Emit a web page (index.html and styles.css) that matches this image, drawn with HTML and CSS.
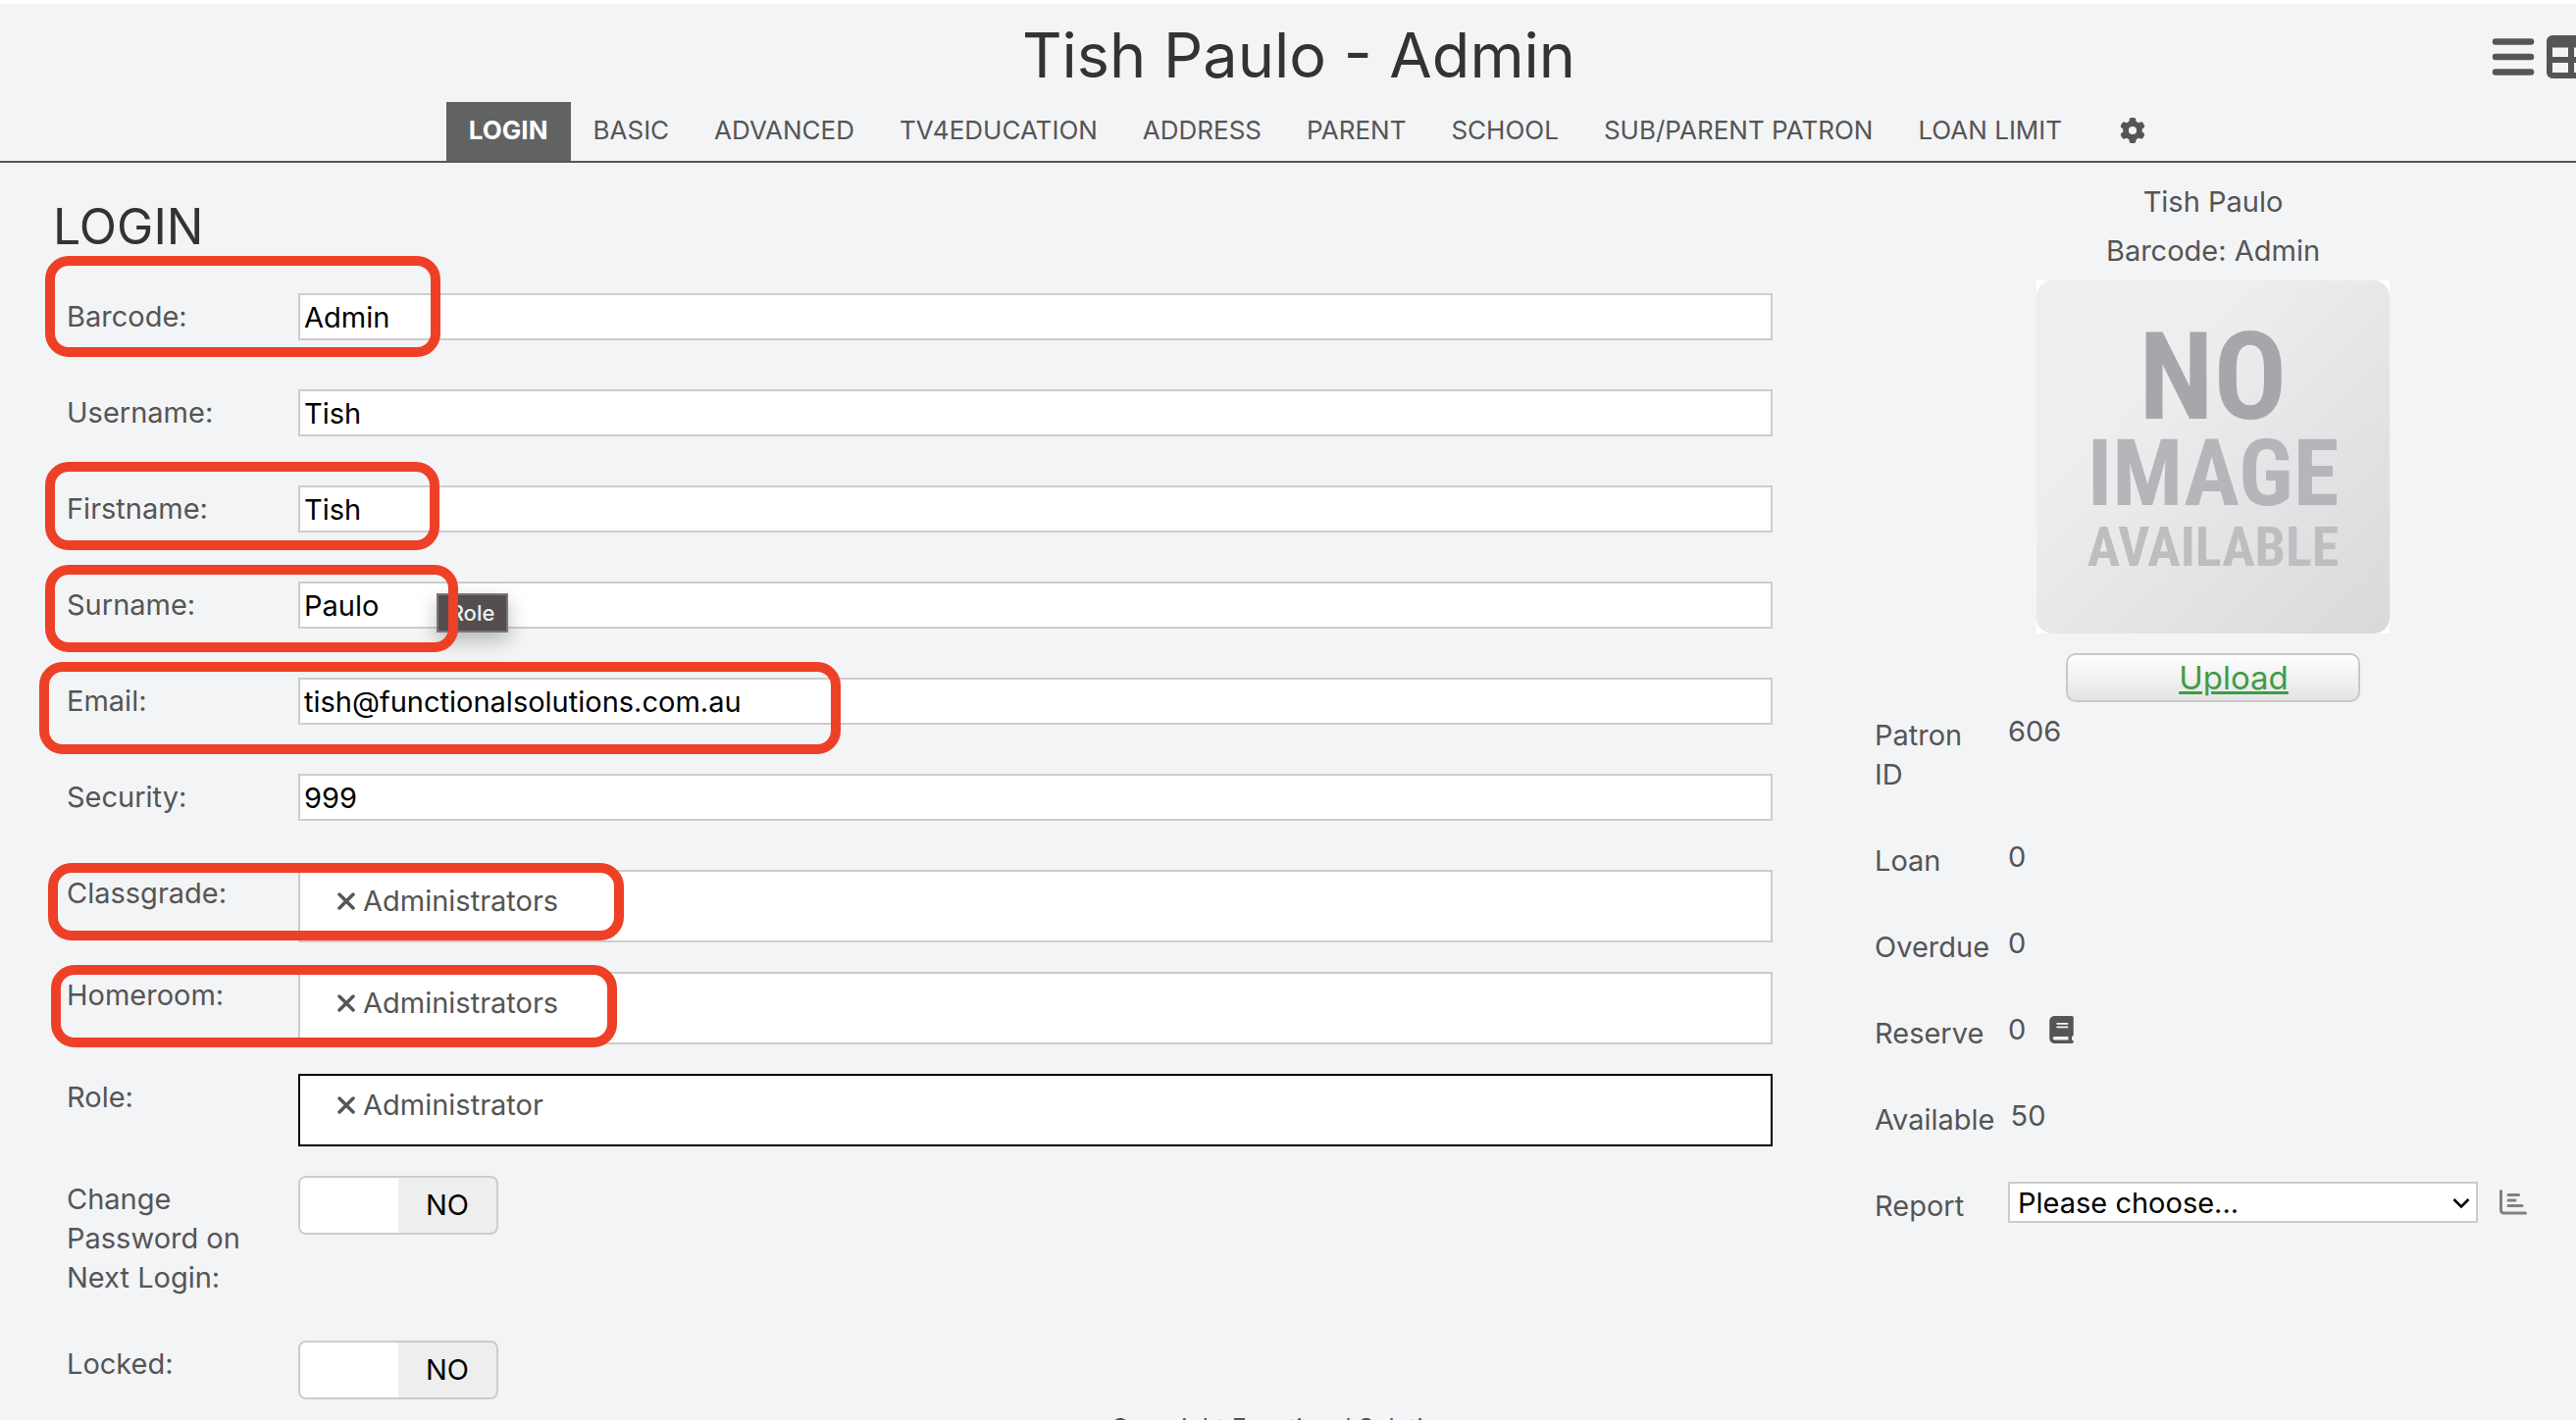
FILE: index.html
```html
<!DOCTYPE html>
<html lang="en">
<head>
<meta charset="utf-8">
<title>Tish Paulo - Admin</title>
<link rel="stylesheet" href="styles.css">
</head>
<body>
<header class="header">
  <h1 class="title">Tish Paulo - Admin</h1>
  <div class="tools">
    <button class="icon-button" type="button" aria-label="Menu">
      <svg width="44" height="44" viewBox="0 0 44 44"><path d="M4 6.500H40M4 22H40M4 37.500H40" stroke="currentColor" stroke-width="6.500" stroke-linecap="round"/></svg>
    </button>
    <button class="icon-button" type="button" aria-label="Table view">
      <svg width="50" height="44" viewBox="0 0 50 44"><path fill="currentColor" fill-rule="evenodd" d="M6 0H44a6 6 0 0 1 6 6V38a6 6 0 0 1-6 6H6a6 6 0 0 1-6-6V6a6 6 0 0 1 6-6ZM6 12.500V22H22V12.500ZM28 12.500V22H44V12.500ZM6 28V38H22V28ZM28 28V38H44V28Z"/></svg>
    </button>
  </div>
  <nav class="tabs">
    <a class="tab tab-active" href="#login">LOGIN</a>
    <a class="tab" href="#basic">BASIC</a>
    <a class="tab" href="#advanced">ADVANCED</a>
    <a class="tab" href="#tv">TV4EDUCATION</a>
    <a class="tab" href="#address">ADDRESS</a>
    <a class="tab" href="#parent">PARENT</a>
    <a class="tab" href="#school">SCHOOL</a>
    <a class="tab" href="#sub">SUB/PARENT PATRON</a>
    <a class="tab" href="#loan">LOAN LIMIT</a>
    <a class="tab tab-icon" href="#settings" aria-label="Settings">
      <svg width="26" height="26" viewBox="0 0 512 512"><path fill="currentColor" d="M495.900 166.600c3.200 8.700 .5 18.400-6.400 24.600l-43.300 39.400c1.100 8.300 1.700 16.800 1.700 25.400s-.6 17.100-1.700 25.400l43.300 39.400c6.900 6.200 9.600 15.900 6.400 24.600c-4.400 11.900-9.700 23.300-15.800 34.300l-4.700 8.100c-6.600 11-14 21.400-22.100 31.200c-5.900 7.200-15.700 9.600-24.500 6.800l-55.700-17.700c-13.400 10.300-28.200 18.900-44 25.400l-12.500 57.100c-2 9.100-9 16.300-18.200 17.800c-13.800 2.300-28 3.500-42.500 3.500s-28.700-1.200-42.500-3.500c-9.200-1.500-16.200-8.700-18.200-17.800l-12.500-57.100c-15.800-6.500-30.600-15.100-44-25.400L83.100 425.900c-8.800 2.800-18.600 .3-24.500-6.800c-8.100-9.800-15.500-20.200-22.100-31.200l-4.700-8.100c-6.100-11-11.400-22.400-15.800-34.300c-3.200-8.700-.5-18.400 6.400-24.600l43.300-39.400C64.600 273.100 64 264.600 64 256s.6-17.100 1.700-25.400L22.400 191.200c-6.900-6.200-9.600-15.900-6.400-24.600c4.400-11.900 9.700-23.300 15.800-34.300l4.700-8.100c6.600-11 14-21.400 22.100-31.200c5.900-7.200 15.700-9.600 24.500-6.800l55.700 17.700c13.400-10.300 28.200-18.900 44-25.400l12.500-57.100c2-9.100 9-16.300 18.200-17.800C227.300 1.200 241.500 0 256 0s28.700 1.200 42.500 3.500c9.200 1.500 16.200 8.700 18.200 17.800l12.500 57.100c15.800 6.500 30.600 15.100 44 25.400l55.700-17.700c8.800-2.800 18.600-.3 24.500 6.800c8.100 9.800 15.500 20.200 22.100 31.200l4.700 8.100c6.100 11 11.400 22.400 15.800 34.300zM256 336a80 80 0 1 0 0-160 80 80 0 1 0 0 160z"/></svg>
    </a>
  </nav>
</header>

<div class="page">
  <main class="main">
    <h2 class="section-title">LOGIN</h2>
    <form class="form">
      <div class="row"><label class="label" for="barcode">Barcode:</label><input class="text-input" id="barcode" type="text" value="Admin"></div>
      <div class="row"><label class="label" for="username">Username:</label><input class="text-input" id="username" type="text" value="Tish"></div>
      <div class="row"><label class="label" for="firstname">Firstname:</label><input class="text-input" id="firstname" type="text" value="Tish"></div>
      <div class="row"><label class="label" for="surname">Surname:</label><input class="text-input" id="surname" type="text" value="Paulo"></div>
      <div class="row"><label class="label" for="email">Email:</label><input class="text-input" id="email" type="text" value="tish@functionalsolutions.com.au"></div>
      <div class="row"><label class="label" for="security">Security:</label><input class="text-input" id="security" type="text" value="999"></div>
      <div class="row row-chips">
        <span class="label">Classgrade:</span>
        <div class="chips"><button class="chip" type="button"><svg width="18" height="18" viewBox="0 0 18 18"><path d="M2 2L16 16M16 2L2 16" stroke="currentColor" stroke-width="3.500" stroke-linecap="round"/></svg>Administrators</button></div>
      </div>
      <div class="row row-chips">
        <span class="label">Homeroom:</span>
        <div class="chips"><button class="chip" type="button"><svg width="18" height="18" viewBox="0 0 18 18"><path d="M2 2L16 16M16 2L2 16" stroke="currentColor" stroke-width="3.500" stroke-linecap="round"/></svg>Administrators</button></div>
      </div>
      <div class="row row-chips">
        <span class="label">Role:</span>
        <div class="chips chips-focus"><button class="chip" type="button"><svg width="18" height="18" viewBox="0 0 18 18"><path d="M2 2L16 16M16 2L2 16" stroke="currentColor" stroke-width="3.500" stroke-linecap="round"/></svg>Administrator</button></div>
      </div>
      <div class="row row-switch">
        <label class="label" for="change">Change Password on Next Login:</label>
        <label class="switch"><input class="switch-box" id="change" type="checkbox"><span class="switch-text">NO</span></label>
      </div>
      <div class="row row-last">
        <label class="label" for="locked">Locked:</label>
        <label class="switch"><input class="switch-box" id="locked" type="checkbox"><span class="switch-text">NO</span></label>
      </div>
    </form>
  </main>

  <aside class="aside">
    <p class="person">Tish Paulo</p>
    <p class="person">Barcode: Admin</p>
    <div class="photo"><div class="photo-card">
      <span class="photo-no">NO</span>
      <span class="photo-image">IMAGE</span>
      <span class="photo-available">AVAILABLE</span>
    </div></div>
    <div class="upload"><a class="upload-link" href="#upload">Upload</a></div>
    <dl class="stats">
      <div class="stat"><dt class="stat-name">Patron ID</dt><dd class="stat-value">606</dd></div>
      <div class="stat"><dt class="stat-name">Loan</dt><dd class="stat-value">0</dd></div>
      <div class="stat"><dt class="stat-name">Overdue</dt><dd class="stat-value">0</dd></div>
      <div class="stat"><dt class="stat-name">Reserve</dt><dd class="stat-value">0
        <svg class="book" width="25" height="28" viewBox="0 0 448 512"><path fill="currentColor" d="M96 0C43 0 0 43 0 96V416c0 53 43 96 96 96H384h32c17.700 0 32-14.300 32-32s-14.300-32-32-32V384c17.700 0 32-14.300 32-32V32c0-17.700-14.300-32-32-32H384 96zm0 384H352v64H96c-17.700 0-32-14.300-32-32s14.300-32 32-32zm32-240c0-8.800 7.200-16 16-16H336c8.800 0 16 7.200 16 16s-7.200 16-16 16H144c-8.800 0-16-7.200-16-16zm16 48H336c8.800 0 16 7.200 16 16s-7.200 16-16 16H144c-8.800 0-16-7.200-16-16s7.200-16 16-16z"/></svg></dd></div>
      <div class="stat"><dt class="stat-name">Available</dt><dd class="stat-value">50</dd></div>
      <div class="stat"><dt class="stat-name"><label for="report">Report</label></dt><dd class="stat-value">
        <span class="select-wrap"><select class="select" id="report"><option>Please choose...</option></select>
          <svg class="chevron" width="18" height="12" viewBox="0 0 18 12"><path d="M1.500 2L9 9.500L16.500 2" fill="none" stroke="#000" stroke-width="2.500"/></svg></span>
        <button class="icon-button report-button" type="button" aria-label="Run report"><svg width="28" height="26" viewBox="0 0 28 26"><path d="M1.500 1.500V21a3 3 0 0 0 3 3H26.500M9 5.500H19.500M9 11H16M9 16.500H23" fill="none" stroke="currentColor" stroke-width="3" stroke-linecap="round"/></svg></button>
      </dd></div>
    </dl>
  </aside>
</div>
<footer class="footer">Copyright Functional Solutions</footer>

<div class="tooltip" role="tooltip">Role</div>
<div class="mark mark-barcode"></div>
<div class="mark mark-firstname"></div>
<div class="mark mark-surname"></div>
<div class="mark mark-email"></div>
<div class="mark mark-classgrade"></div>
<div class="mark mark-homeroom"></div>
</body>
</html>
```
FILE: styles.css
```css
* { box-sizing: border-box; }

body {
  position: relative;
  height: 100vh;
  margin: 0;
  overflow: hidden;
  border-top: 4px solid #fff;
  background: #f3f4f6;
  color: #555;
  font: 29px/40px Inter, "Liberation Sans", sans-serif;
}

button, input, select { font: inherit; color: inherit; }
h1, h2, p, dl, dd { margin: 0; }
svg { display: block; }

/* Header */
.header { position: relative; border-bottom: 2px solid #555; }
.title {
  padding: 4px 0 0 22px;
  color: #333;
  font-size: 63px;
  font-weight: 400;
  line-height: 96px;
  text-align: center;
}
.tools { position: absolute; top: 32px; right: -20px; display: flex; gap: 12px; }
.icon-button { padding: 0; border: 0; background: none; color: #555; }
.tabs { display: flex; justify-content: center; padding-left: 52px; }
.tab {
  height: 60px;
  padding: 0 23px;
  color: #555;
  font-size: 26px;
  line-height: 58px;
  text-decoration: none;
}
.tab-active { background: #616362; color: #fff; font-weight: 700; }
.tab-icon { padding: 16px 36px; }

/* Form */
.page { display: flex; }
.main { flex: 1; padding: 36px 79px 0 54px; }
.section-title {
  margin-bottom: 39px;
  color: #333;
  font-size: 50px;
  font-weight: 400;
  line-height: 58px;
}
.row {
  display: grid;
  grid-template-columns: 236px 1fr;
  align-items: start;
  margin: 0 0 50px 14px;
}
.row-chips { margin-bottom: 30px; }
.row-switch { margin-bottom: 44px; }
.row-last { margin-bottom: 14px; }
.label { padding: 4px 40px 0 0; }
.text-input {
  width: 100%;
  height: 48px;
  padding: 0 4px;
  border: 2px solid #ccc;
  border-radius: 0;
  background: #fff;
  color: #000;
}
.chips { height: 74px; padding: 10px 38px; border: 2px solid #ccc; background: #fff; }
.chips-focus { border-color: #000; }
.chip {
  display: flex;
  align-items: center;
  gap: 8px;
  padding: 0;
  border: 0;
  background: none;
}
.switch {
  display: flex;
  width: 204px;
  height: 60px;
  border: 2px solid #ccc;
  border-radius: 8px;
  overflow: hidden;
  background: #eee;
  color: #000;
}
.switch-box { appearance: none; width: 50%; margin: 0; background: #fff; }
.switch-text { width: 50%; line-height: 56px; text-align: center; }

/* Patron summary */
.aside { flex: 0 0 740px; padding-top: 20px; }
.person { margin-bottom: 10px; text-align: center; }
.photo { width: 360px; height: 360px; margin: 0 auto 20px; background: #fff; }
.photo-card {
  display: flex;
  flex-direction: column;
  align-items: center;
  height: 100%;
  padding-top: 44px;
  border-radius: 16px;
  background: linear-gradient(135deg, #eeeeef 30%, #d8d9db);
  font-family: "Roboto Condensed", "Liberation Sans Narrow", "Liberation Sans", sans-serif;
  font-weight: 700;
}
.photo-no { color: #a5a7aa; font-size: 124px; line-height: 110px; }
.photo-image { color: #b4b6b9; font-size: 95px; line-height: 86px; }
.photo-available { color: #bcbec0; font-size: 56px; line-height: 64px; }
.upload {
  width: 300px;
  height: 50px;
  margin: 0 auto 10px;
  padding-left: 42px;
  border: 2px solid #c8c8c8;
  border-radius: 10px;
  background: linear-gradient(#fff, #e4e4e4);
  text-align: center;
}
.upload-link {
  color: #3f9c45;
  font-size: 33px;
  line-height: 46px;
  text-decoration-thickness: 3px;
}
.stat { display: flex; padding: 0 50px 44px 25px; }
.stat-name { flex: 0 0 136px; padding-top: 4px; padding-right: 16px; }
.stat-value { display: flex; flex: 1; align-items: center; height: 40px; }
.book { margin-left: 24px; }
.select-wrap { position: relative; flex: 1; }
.select {
  display: block;
  appearance: none;
  width: 100%;
  height: 42px;
  padding: 0 8px;
  border: 2px solid #ccc;
  border-radius: 0;
  background: #fff;
  color: #000;
}
.chevron { position: absolute; top: 16px; right: 8px; }
.report-button { margin-left: 22px; color: #808080; }

.footer { font-size: 25px; line-height: 30px; text-align: center; }

/* Overlays */
.tooltip {
  position: absolute;
  top: 601px;
  left: 445px;
  width: 73px;
  height: 40px;
  border: 2px solid #777;
  background: #544f4e;
  box-shadow: 0 8px 20px rgba(0, 0, 0, .25);
  color: #eee;
  font-size: 22px;
  font-weight: 500;
  line-height: 36px;
  text-align: center;
}
.mark { position: absolute; border: 10px solid #ee4026; border-radius: 24px; }
.mark-barcode { top: 257px; left: 46px; width: 403px; height: 103px; }
.mark-firstname { top: 467px; left: 46px; width: 402px; height: 90px; }
.mark-surname { top: 572px; left: 46px; width: 421px; height: 89px; }
.mark-email { top: 671px; left: 40px; width: 817px; height: 94px; }
.mark-classgrade { top: 876px; left: 49px; width: 587px; height: 79px; }
.mark-homeroom { top: 980px; left: 52px; width: 577px; height: 84px; }
```
